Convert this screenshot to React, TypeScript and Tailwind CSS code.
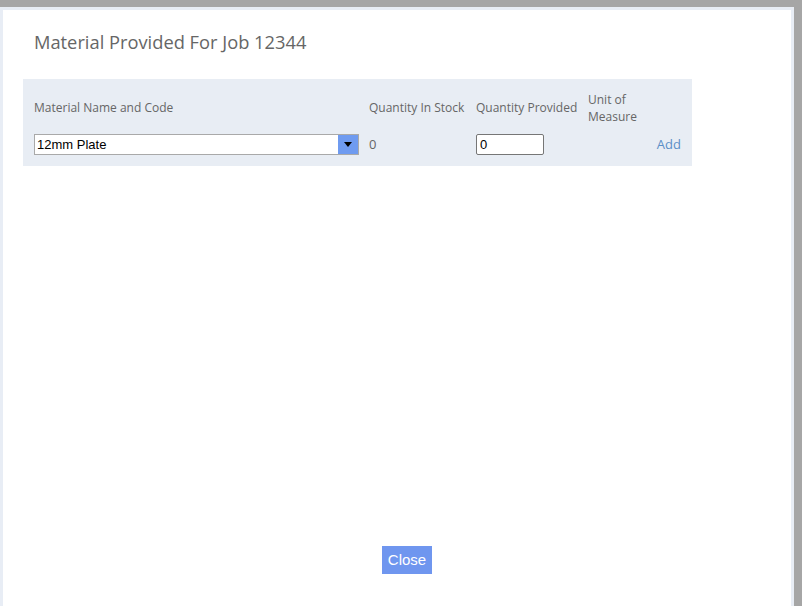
export default function App() {
  return (
    <div className="h-screen w-full bg-[#a6a6a6] pt-[7px] pr-[8px]">
      <div className="flex h-full flex-col bg-[#e8edf5] pt-[3px] pl-[3px] pr-[3px]">
        <div className="flex flex-1 flex-col bg-white font-['Open_Sans',sans-serif]">
          <h1 className="mt-[18px] ml-[31px] text-[18.3px] leading-[28px] text-[#666]">
            Material Provided For Job 12344
          </h1>
          <div className="mt-[23px] ml-[20px] w-[669px] bg-[#e8edf4] px-[11px] pt-[8px] pb-[11px] text-[12px] text-[#666]">
            <div className="flex h-[42px] items-center">
              <div className="w-[335px]">Material Name and Code</div>
              <div className="w-[107px]">Quantity In Stock</div>
              <div className="w-[112px]">Quantity Provided</div>
              <div className="leading-[17px]">
                Unit of
                <br />
                Measure
              </div>
            </div>
            <div className="mt-[5px] flex h-[21px] items-center">
              <div className="w-[335px]">
                <div className="flex h-[21px] w-[325px] items-stretch border border-[#a9a9a9] bg-white">
                  <span className="flex-1 pl-[2px] font-['Liberation_Sans',sans-serif] text-[13px] leading-[19px] text-black">
                    12mm Plate
                  </span>
                  <span className="flex w-[20px] items-center justify-center bg-[#6f9bf0]">
                    <svg width="8" height="5" viewBox="0 0 8 5">
                      <path d="M0 0h8L4 5z" fill="#000" />
                    </svg>
                  </span>
                </div>
              </div>
              <div className="w-[107px] text-[13px]">0</div>
              <div className="w-[112px]">
                <div className="h-[21px] w-[68px] rounded-[2px] border border-[#767676] bg-white pl-[3px] font-['Liberation_Sans',sans-serif] text-[13px] leading-[19px] text-black">
                  0
                </div>
              </div>
              <div className="flex-1 text-right text-[13px] text-[#5b8fc7]">Add</div>
            </div>
          </div>
          <div className="mt-auto mb-[32px] flex justify-center">
            <button className="ml-[20px] h-[28px] w-[50px] bg-[#6f96ef] font-['Liberation_Sans',sans-serif] text-[15px] text-white">
              Close
            </button>
          </div>
        </div>
      </div>
    </div>
  )
}
